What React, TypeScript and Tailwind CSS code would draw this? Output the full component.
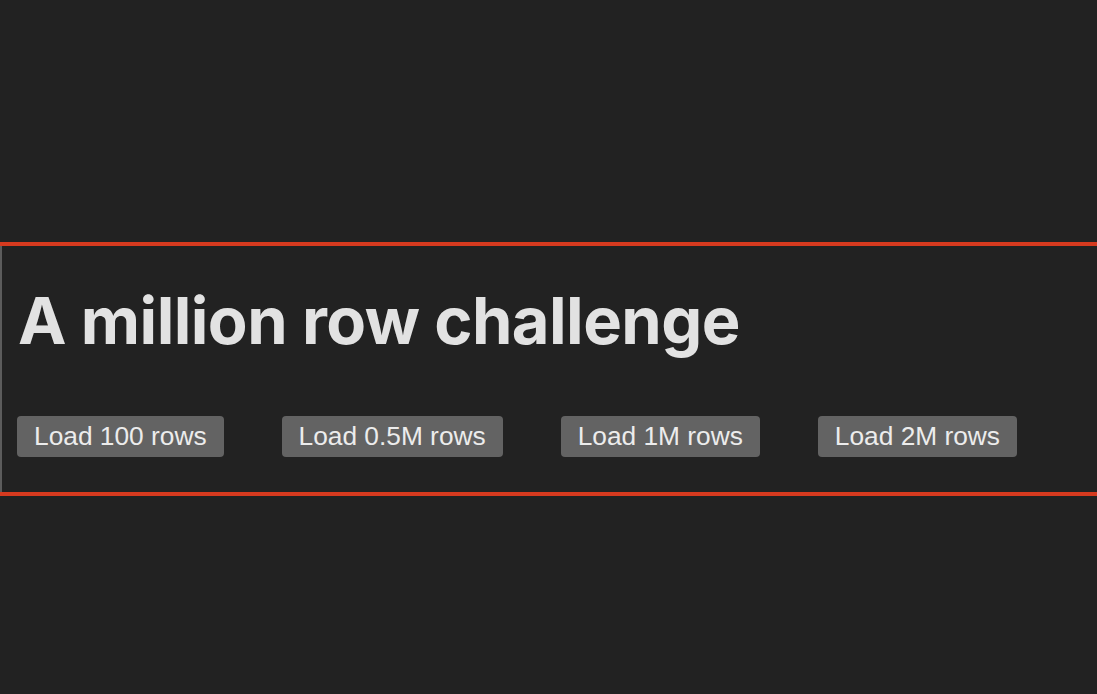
const sizes = ["100", "0.5M", "1M", "2M"];

export default function App() {
  return (
    <div className="min-h-[694px] bg-[#222222] pt-[242px]">
      <section className="border-y-[4px] border-[#d63a1f]">
        <div className="border-l-2 border-[#5c5c5c] pl-[15px] pt-[36px] pb-[35px]">
          <h1
            className="pl-px text-[65px] font-bold leading-[78px] text-[#e2e2e2] tracking-[-0.55px]"
            style={{ fontFamily: "Inter, 'Noto Sans', sans-serif" }}
          >
            A million row challenge
          </h1>
          <div className="mt-[56px] flex gap-[58px]">
            {sizes.map((s) => (
              <button
                key={s}
                className="h-[41px] rounded-[4px] bg-[#636363] px-[17px] text-[26.3px] text-[#ececec]"
                style={{ fontFamily: "'Liberation Sans', Arial, sans-serif" }}
              >
                Load {s} rows
              </button>
            ))}
          </div>
        </div>
      </section>
    </div>
  );
}
